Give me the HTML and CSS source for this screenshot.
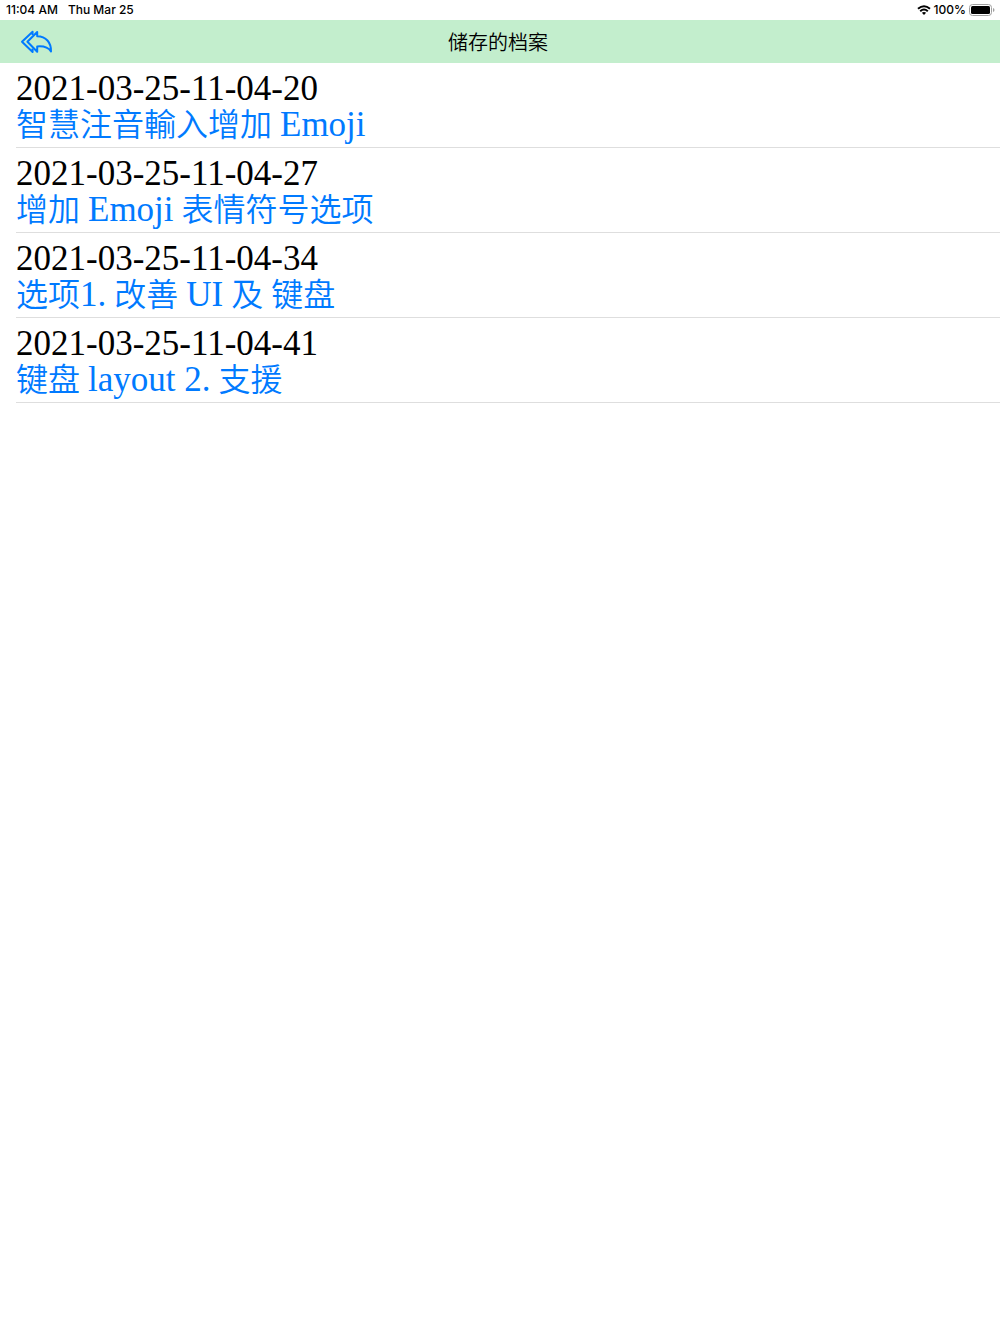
FILE: index.html
```html
<!DOCTYPE html>
<html lang="zh-CN">
<head>
    <meta charset="UTF-8">
    <meta name="viewport" content="width=device-width, initial-scale=1.0">
    <title>储存的档案</title>
    <link rel="stylesheet" href="styles.css">
</head>
<body>
    <div class="status-bar">
        <div class="status-left">
            <span>11:04 AM</span>
            <span>Thu Mar 25</span>
        </div>
        <div class="status-right">
            <svg class="wifi" viewBox="0 0 14 10" aria-hidden="true">
                <path d="M1 3.8 Q7 -1.4 13 3.8" />
                <path d="M3.2 6.2 Q7 2.8 10.8 6.2" />
                <path class="dot" d="M4.9 7.8 Q7 6.2 9.1 7.8 L7 10 Z" />
            </svg>
            <span>100%</span>
            <svg class="battery" viewBox="0 0 26 12" aria-hidden="true">
                <rect class="shell" x="0.5" y="0.5" width="22" height="11" rx="3" />
                <rect x="2" y="2" width="19" height="8" rx="1.5" />
                <path class="tip" d="M24 4 Q25.5 4.6 25.5 6 Q25.5 7.4 24 8 Z" />
            </svg>
        </div>
    </div>

    <header class="nav-bar">
        <button class="back" type="button" aria-label="返回">
            <svg viewBox="0 0 33 24" aria-hidden="true">
                <path d="M17.2 6.2 V2 L7.4 11.8 L17.2 21.8 V16.4 C24 15.8 28.4 17.4 31 21.4 C31.2 12.5 26 6.4 17.2 6.2 Z" />
                <path d="M12.6 5 V1.8 L2 11.8 L12.6 22 V18.6" />
            </svg>
        </button>
        <h1>储存的档案</h1>
    </header>

    <ul class="file-list">
        <li>
            <div class="date">2021-03-25-11-04-20</div>
            <a href="#">智慧注音輸入增加 <span class="latin">Emoji</span></a>
        </li>
        <li>
            <div class="date">2021-03-25-11-04-27</div>
            <a href="#">增加 <span class="latin">Emoji</span> 表情符号选项</a>
        </li>
        <li>
            <div class="date">2021-03-25-11-04-34</div>
            <a href="#">选项<span class="latin">1.</span> 改善 <span class="latin">UI</span> 及 键盘</a>
        </li>
        <li>
            <div class="date">2021-03-25-11-04-41</div>
            <a href="#">键盘 <span class="latin">layout 2.</span> 支援</a>
        </li>
    </ul>
</body>
</html>
```
FILE: styles.css
```css
body {
    margin: 0;
    background-color: #fff;
    color: #000;
    font-family: Georgia, "Liberation Serif", "Noto Sans CJK SC", serif;
}
.status-bar {
    display: flex;
    justify-content: space-between;
    align-items: center;
    height: 20px;
    padding: 0 5px 0 6px;
    font-family: Inter, sans-serif;
    font-size: 12px;
    font-weight: 500;
    line-height: 18px;
}
.status-left {
    display: flex;
    gap: 10px;
}
.status-right {
    display: flex;
    align-items: center;
    gap: 3px;
}
.wifi {
    width: 14px;
    height: 10px;
    fill: none;
    stroke: #000;
    stroke-width: 2;
}
.wifi .dot {
    fill: #000;
    stroke: none;
}
.battery {
    width: 26px;
    height: 12px;
}
.battery .shell {
    fill: none;
    stroke: #a0a0a0;
}
.battery .tip {
    fill: #a0a0a0;
}
.nav-bar {
    display: grid;
    grid-template-columns: 1fr auto 1fr;
    align-items: center;
    height: 43px;
    padding: 0 24px 0 20px;
    background-color: #c3eecd;
}
.nav-bar h1 {
    margin: 0;
    font-family: "Noto Sans CJK SC", sans-serif;
    font-size: 20px;
    font-weight: 350;
}
.back {
    justify-self: start;
    padding: 0;
    border: none;
    background: none;
    cursor: pointer;
}
.back svg {
    display: block;
    width: 33px;
    height: 24px;
    fill: none;
    stroke: #007aff;
    stroke-width: 2;
    stroke-linejoin: round;
}
.file-list {
    margin: 0;
    padding: 0 0 0 16px;
    list-style: none;
}
.file-list li {
    padding: 8px 0 4px;
    border-bottom: 1px solid #dedede;
    line-height: 36px;
}
.date,
.latin {
    font-size: 35px;
}
.file-list a {
    display: block;
    color: #007aff;
    font-size: 32px;
    font-weight: 350;
    text-decoration: none;
}
.latin {
    font-weight: 400;
}
```
